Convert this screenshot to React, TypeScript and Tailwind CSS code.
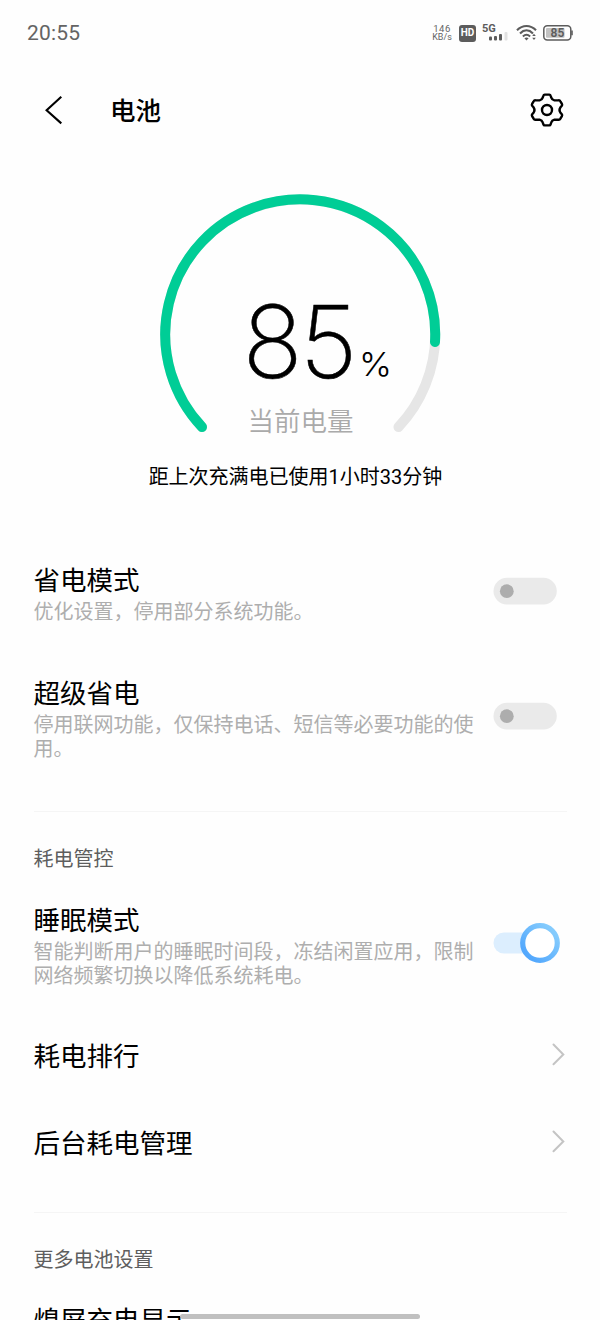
import { clsx } from "clsx";
import { useState } from "react";

function StatusBar() {
	return (
		<div className="flex h-[66px] items-center justify-between pl-[27px] pr-[26px] text-[#646464]">
			<span className="text-[21px] leading-6 tracking-[0.2px]">20:55</span>
			<div className="flex h-5 items-center">
				<div className="flex w-5 flex-col items-center text-[9.5px] leading-[9px]">
					<span className="tracking-[0.5px]">146</span>
					<span className="text-[9px]">KB/s</span>
				</div>
				<div className="ml-[7px] flex h-[17px] w-[17px] items-center justify-center rounded-[3px] bg-[#5c5c5c] text-[10px] font-bold leading-none text-white">
					HD
				</div>
				<svg className="ml-[6px]" width="27" height="20" viewBox="0 0 27 20">
					<text x="0" y="9" fontSize="11" fontWeight="700" fill="#5c5c5c">
						5G
					</text>
					<rect x="7" y="13.5" width="3" height="4" rx="1" fill="#5c5c5c" />
					<rect x="12" y="13" width="3" height="4.5" rx="1" fill="#5c5c5c" />
					<rect x="17" y="11" width="3" height="6.5" rx="1" fill="#5c5c5c" />
					<rect x="22.5" y="9" width="3" height="8.5" rx="1" fill="#e2e2e2" />
				</svg>
				<svg className="ml-[7px]" width="22" height="20" viewBox="0 0 22 20">
					<g fill="none" stroke="#5c5c5c" strokeWidth="2.1">
						<path d="M1 7.3C6.5 1.6 14.5 1.6 20 7.3" />
						<path d="M4 10.4C8 6.4 13 6.4 17 10.4" />
						<path d="M6.9 13.4C9.3 11.2 11.7 11.2 14.1 13.4" />
					</g>
					<path d="M8.4 15.2C9.8 14.1 11.2 14.1 12.6 15.2L10.5 17.6Z" fill="#5c5c5c" />
					<path d="M16.2 13L18 10.8L19.8 13ZM16.2 14.8L18 17L19.8 14.8Z" fill="#5c5c5c" />
				</svg>
				<svg className="ml-[5px]" width="31" height="16" viewBox="0 0 31 16">
					<rect x="0.8" y="0.8" width="27" height="14.2" rx="3.5" fill="none" stroke="#5c5c5c" strokeWidth="1.5" />
					<rect x="3" y="3" width="18.5" height="9.8" rx="1" fill="#c2c2c2" />
					<path d="M29 5.6V10.2" stroke="#5c5c5c" strokeWidth="1.6" />
					<text x="14.4" y="12.1" textAnchor="middle" fontSize="12" fontWeight="600" fill="#5c5c5c">
						85
					</text>
				</svg>
			</div>
		</div>
	);
}

function Header() {
	return (
		<header className="flex h-[88px] items-center pl-[44px] pr-[36px]">
			<svg width="20" height="30" viewBox="0 0 20 30" fill="none" stroke="#000" strokeWidth="2.1">
				<path d="M17.3 1.8L2.6 15.2L17.3 28.4" />
			</svg>
			<h1 className="ml-[46px] mt-[2px] flex-1 text-[25.5px] font-medium leading-8">电池</h1>
			<svg width="34" height="36" viewBox="0 0 34 36" fill="none" stroke="#000" strokeWidth="2.4">
				<path
					strokeLinejoin="round"
					d="M14.7 2.6H19.3Q20.3 2.6 20.6 3.6L21.3 5.6Q22 7.9 24.4 8.4L28.6 8.3Q29.8 8.2 30.4 9.3L31.9 11.9Q32.5 12.9 31.8 13.8L30.3 15.6Q28.7 18 30.3 20.4L31.8 22.2Q32.5 23.1 31.9 24.1L30.4 26.7Q29.8 27.8 28.6 27.7L24.4 27.6Q22 28.1 21.3 30.4L20.6 32.4Q20.3 33.4 19.3 33.4H14.7Q13.7 33.4 13.4 32.4L12.7 30.4Q12 28.1 9.6 27.6L5.4 27.7Q4.2 27.8 3.6 26.7L2.1 24.1Q1.5 23.1 2.2 22.2L3.7 20.4Q5.3 18 3.7 15.6L2.2 13.8Q1.5 12.9 2.1 11.9L3.6 9.3Q4.2 8.2 5.4 8.3L9.6 8.4Q12 7.9 12.7 5.6L13.4 3.6Q13.7 2.6 14.7 2.6Z"
				/>
				<circle cx="17" cy="18" r="5" />
			</svg>
		</header>
	);
}

function BatteryGauge() {
	return (
		<section className="flex flex-col items-center pt-[36px]">
			<svg width="290" height="250" viewBox="155 190 290 250">
				<g fill="none" strokeWidth="10" strokeLinecap="round">
					<path d="M202 427A135 135 0 1 1 398.5 427" stroke="#e6e6e6" />
					<path d="M202 427A135 135 0 1 1 435 342" stroke="#00cd96" />
				</g>
				<text
					className="font-['Inter']"
					x="242.5"
					y="378"
					fontSize="101"
					fontWeight="200"
					letterSpacing="-3"
					textLength="112"
					lengthAdjust="spacingAndGlyphs"
					stroke="#000"
					strokeWidth="0.5"
				>
					85
				</text>
				<text
					className="font-['Inter']"
					x="359"
					y="375.5"
					fontSize="33"
					fontWeight="300"
					textLength="33"
					lengthAdjust="spacingAndGlyphs"
				>
					%
				</text>
				<text x="300.5" y="431" textAnchor="middle" fontSize="26.5" fill="#aaaaaa" fontWeight="350">
					当前电量
				</text>
			</svg>
			<p className="mr-[9px] mt-[25px] text-[20px] leading-6">距上次充满电已使用1小时33分钟</p>
		</section>
	);
}

function Toggle({ on, onChange }: { on: boolean; onChange: () => void }) {
	return (
		<button type="button" role="switch" aria-checked={on} onClick={onChange} className="mb-[9px] h-10 w-[67px]">
			{on ? (
				<svg width="67" height="40" viewBox="0 0 67 40">
					<defs>
						<linearGradient id="knob" x1="0.15" y1="0.85" x2="0.85" y2="0.15">
							<stop offset="0" stopColor="#53a8fd" />
							<stop offset="1" stopColor="#84cbfd" />
						</linearGradient>
					</defs>
					<rect x="0.5" y="9.5" width="60" height="21" rx="10.5" fill="#dceefe" />
					<circle cx="47" cy="20" r="17.3" fill="#fff" stroke="url(#knob)" strokeWidth="5.2" />
				</svg>
			) : (
				<svg width="67" height="40" viewBox="0 0 67 40">
					<rect x="0.5" y="6.8" width="63.3" height="26.6" rx="13.3" fill="#eaeaea" />
					<circle cx="13.8" cy="20.2" r="6.9" fill="#adadad" />
				</svg>
			)}
		</button>
	);
}

function SwitchRow({
	title,
	desc,
	defaultOn = false,
	className,
}: { title: string; desc: string; defaultOn?: boolean; className?: string }) {
	const [on, setOn] = useState(defaultOn);

	return (
		<div className={clsx("flex items-center justify-between pr-[40px]", className)}>
			<div className="w-[446px]">
				<h2 className="text-[26.5px] leading-7">{title}</h2>
				<p className="mt-[5px] text-[20px] leading-6 text-[#aeaeae]">{desc}</p>
			</div>
			<Toggle on={on} onChange={() => setOn(!on)} />
		</div>
	);
}

function LinkRow({ title }: { title: string }) {
	return (
		<div className="flex h-[87px] items-center justify-between pr-[34px]">
			<span className="text-[26.5px] leading-7">{title}</span>
			<svg
				className="mb-[6px]"
				width="14"
				height="24"
				viewBox="0 0 14 24"
				fill="none"
				stroke="#c4c4c4"
				strokeWidth="2"
				strokeLinecap="round"
			>
				<path d="M1.5 2.5L11.3 12.5L1.5 22.3" />
			</svg>
		</div>
	);
}

export default function App() {
	return (
		<div className="relative h-[1320px] w-[600px] overflow-hidden bg-[#fefefe] font-['Roboto','Noto_Sans_CJK_SC',sans-serif] text-black">
			<StatusBar />
			<Header />
			<BatteryGauge />
			<main className="pl-[33.5px] pt-[78px]">
				<SwitchRow title="省电模式" desc="优化设置，停用部分系统功能。" />
				<SwitchRow
					className="mt-[56px]"
					title="超级省电"
					desc="停用联网功能，仅保持电话、短信等必要功能的使用。"
				/>
				<hr className="mr-[33px] mt-[50px] border-[#f5f5f5]" />
				<h3 className="mt-[35px] text-[20px] leading-6 text-[#5e5e5e]">耗电管控</h3>
				<SwitchRow
					className="mb-[25px] mt-[36px]"
					title="睡眠模式"
					desc="智能判断用户的睡眠时间段，冻结闲置应用，限制网络频繁切换以降低系统耗电。"
					defaultOn
				/>
				<LinkRow title="耗电排行" />
				<LinkRow title="后台耗电管理" />
				<hr className="mr-[33px] mt-[25px] border-[#f5f5f5]" />
				<h3 className="mt-[35px] text-[20px] leading-6 text-[#5e5e5e]">更多电池设置</h3>
				<h2 className="mt-[35px] text-[26.5px] leading-7">熄屏充电显示</h2>
			</main>
			{/* gesture bar */}
			<div className="absolute left-[180px] top-[1314px] h-[5px] w-[240px] rounded-full bg-[#c0c0c0]" />
		</div>
	);
}
